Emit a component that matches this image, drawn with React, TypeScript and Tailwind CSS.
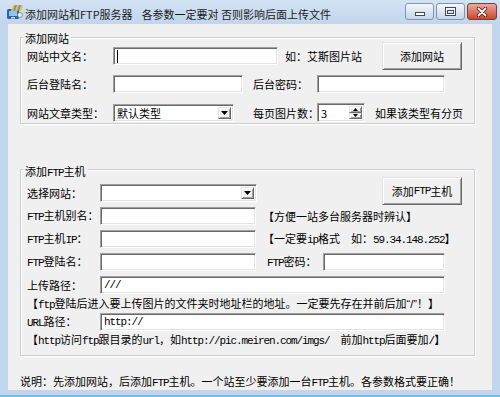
import React from "react";

const sunken =
  "bg-white border border-t-[#a0a0a0] border-l-[#a0a0a0] border-r-[#ffffff] border-b-[#ffffff] shadow-[inset_1px_1px_0_#696969,inset_-1px_-1px_0_#e3e3e3]";
const raised =
  "bg-[#f0f0f0] border border-t-[#e3e3e3] border-l-[#e3e3e3] border-r-[#696969] border-b-[#696969] shadow-[inset_1px_1px_0_#ffffff,inset_-1px_-1px_0_#a0a0a0]";
const group =
  "ml-[12px] w-[455px] border border-[#c9ced3] shadow-[inset_1px_1px_0_#ffffff,1px_1px_0_#ffffff] flex flex-col";
const mono = "font-['Liberation_Mono',monospace] tracking-[-1.1px]";

function M({ children }: { children: React.ReactNode }) {
  return <span className={mono}>{children}</span>;
}

function Down() {
  return (
    <svg width="7" height="4" viewBox="0 0 7 4">
      <polygon points="0,0 7,0 3.5,4" fill="#000" />
    </svg>
  );
}

function Up() {
  return (
    <svg width="5" height="3" viewBox="0 0 5 3">
      <polygon points="0,3 5,3 2.5,0" fill="#000" />
    </svg>
  );
}

function Down5() {
  return (
    <svg width="5" height="3" viewBox="0 0 5 3">
      <polygon points="0,0 5,0 2.5,3" fill="#000" />
    </svg>
  );
}

function Select({ className, children }: { className: string; children?: React.ReactNode }) {
  return (
    <div className={`${sunken} ${className} h-[18px] flex p-[2px] shrink-0`}>
      <div className="flex-1 flex items-center pl-[1px] whitespace-nowrap">
        <span className="leading-[14px]">{children}</span>
      </div>
      <div className={`${raised} w-[13px] flex items-center justify-center`}>
        <Down />
      </div>
    </div>
  );
}

function Input({ className, children }: { className: string; children?: React.ReactNode }) {
  return (
    <div className={`${sunken} ${className} h-[18px] flex items-center pl-[3px] shrink-0 leading-[14px] whitespace-nowrap`}>
      {children}
    </div>
  );
}

function Button({ children }: { children: React.ReactNode }) {
  return (
    <div className={`${raised} w-[80px] h-[28px] flex items-center justify-center leading-[14px] shrink-0`}>
      {children}
    </div>
  );
}

function AppIcon() {
  return (
    <svg width="18" height="16" viewBox="0 0 18 16">
      <rect x="1" y="5" width="12" height="10" rx="1.5" fill="#2f5fa8" />
      <rect x="3" y="7" width="8" height="5" fill="#8cc6f2" />
      <rect x="5" y="13" width="4" height="1.5" fill="#cfe3f6" />
      <polygon points="7,1 17,1 15,7 5,7" fill="#f2c230" />
      <polygon points="9,1 11,1 9,7 7,7" fill="#6b8fc8" />
      <polygon points="13,1 15,1 13,7 11,7" fill="#6b8fc8" />
      <circle cx="14" cy="11" r="2.5" fill="#e9edf2" stroke="#6c7c90" strokeWidth="0.8" />
    </svg>
  );
}

export default function App() {
  return (
    <div className="w-[500px] h-[397px] bg-[#c1d5ec] flex flex-col font-['Noto_Sans_CJK_SC',sans-serif] text-[11px] text-black overflow-hidden">
      {/* Title bar */}
      <div className="h-[24px] shrink-0 flex items-start bg-linear-to-b from-[#d3e3f5] to-[#c1d5ec]">
        <div className="ml-[6px] mt-[4px]">
          <AppIcon />
        </div>
        <div className="ml-[1px] mt-[7px] leading-[14px] whitespace-nowrap text-[#1b1b1b]">
          <span>添加网站和FTP服务器</span>
          <span className="ml-[9px]">各参数一定要对 否则影响后面上传文件</span>
        </div>
        <div className="flex-1" />
        <div className="mt-[3px] mr-[3px] flex gap-[2px]">
          <div className="w-[29px] h-[17px] rounded-[3px] border border-[#8195b2] bg-linear-to-b from-[#f3f7fc] to-[#c6d5e8] flex items-end justify-center pb-[3px]">
            <svg width="10" height="4" viewBox="0 0 10 4">
              <rect x="0.5" y="0.5" width="9" height="3" fill="#fff" stroke="#3c4b62" />
            </svg>
          </div>
          <div className="w-[29px] h-[17px] rounded-[3px] border border-[#8195b2] bg-linear-to-b from-[#f3f7fc] to-[#c6d5e8] flex items-center justify-center">
            <svg width="11" height="9" viewBox="0 0 11 9">
              <rect x="0.5" y="0.5" width="10" height="8" fill="none" stroke="#3c4b62" />
              <rect x="1.5" y="1.5" width="8" height="6" fill="none" stroke="#ffffff" />
              <rect x="2.5" y="3.5" width="6" height="3" fill="none" stroke="#3c4b62" />
            </svg>
          </div>
          <div className="w-[30px] h-[17px] rounded-[3px] border border-[#8e3a2b] bg-linear-to-b from-[#eaa999] to-[#c5452f] flex items-center justify-center">
            <svg width="12" height="10" viewBox="0 0 12 10">
              <path d="M2.5 1.5 L9.5 8.5 M9.5 1.5 L2.5 8.5" stroke="#5b1a10" strokeWidth="3.4" strokeLinecap="round" />
              <path d="M2.5 1.5 L9.5 8.5 M9.5 1.5 L2.5 8.5" stroke="#ffffff" strokeWidth="1.8" strokeLinecap="round" />
            </svg>
          </div>
        </div>
      </div>

      {/* Client area */}
      <div className="mx-[8px] h-[366px] shrink-0 bg-[#f0f0f0] flex flex-col">
        {/* Group 1 */}
        <div className={`${group} mt-[13px] pb-[1px]`}>
          <div className="-mt-[7px] ml-[2px] w-fit px-[2px] bg-[#f0f0f0] leading-[14px]">添加网站</div>
          <div className="-mt-[3px] h-[28px] flex items-center pl-[6px] pr-[12px]">
            <div className="w-[86px] leading-[14px] whitespace-nowrap">网站中文名：</div>
            <Input className="w-[165px]">
              <div className="w-[1px] h-[13px] bg-black" />
            </Input>
            <div className="ml-[7px] leading-[14px] whitespace-nowrap">如：艾斯图片站</div>
            <div className="flex-1" />
            <Button>添加网站</Button>
          </div>
          <div className="mt-[5px] h-[18px] flex items-center pl-[6px]">
            <div className="w-[86px] leading-[14px] whitespace-nowrap">后台登陆名：</div>
            <Input className="w-[130px]" />
            <div className="ml-[10px] w-[64px] leading-[14px] whitespace-nowrap">后台密码：</div>
            <Input className="w-[128px]" />
          </div>
          <div className="mt-[10px] h-[19px] flex items-center pl-[6px]">
            <div className="w-[86px] leading-[14px] whitespace-nowrap">网站文章类型：</div>
            <Select className="w-[121px]">默认类型</Select>
            <div className="ml-[19px] w-[64px] leading-[14px] whitespace-nowrap">每页图片数：</div>
            <div className={`${sunken} w-[48px] h-[19px] flex p-[2px] shrink-0`}>
              <div className="flex-1 flex items-center pl-[1px]">
                <span className="leading-[14px]">3</span>
              </div>
              <div className="w-[13px] flex flex-col">
                <div className={`${raised} flex-1 flex items-center justify-center`}>
                  <Up />
                </div>
                <div className={`${raised} flex-1 flex items-center justify-center`}>
                  <Down5 />
                </div>
              </div>
            </div>
            <div className="ml-[10px] leading-[14px] whitespace-nowrap">如果该类型有分页</div>
          </div>
        </div>

        {/* Group 2 */}
        <div className={`${group} mt-[45px] pb-[7px]`}>
          <div className="-mt-[6px] ml-[2px] w-fit px-[2px] bg-[#f0f0f0] leading-[14px]">
            添加<M>FTP</M>主机
          </div>
          <div className="-mt-[3px] h-[28px] flex items-start pl-[6px] pr-[12px]">
            <div className="mt-[7px] h-[18px] flex items-center">
              <div className="w-[73px] leading-[14px] whitespace-nowrap">选择网站：</div>
              <Select className="w-[157px]" />
            </div>
            <div className="flex-1" />
            <Button>
              添加<M>FTP</M>主机
            </Button>
          </div>
          <div className="mt-[2px] h-[18px] flex items-center pl-[6px]">
            <div className="w-[73px] leading-[14px] whitespace-nowrap">
              <M>FTP</M>主机别名：
            </div>
            <Input className="w-[156px]" />
            <div className="ml-[7px] leading-[14px] whitespace-nowrap">【方便一站多台服务器时辨认】</div>
          </div>
          <div className="mt-[5px] h-[18px] flex items-center pl-[6px]">
            <div className="w-[73px] leading-[14px] whitespace-nowrap">
              <M>FTP</M>主机<M>IP</M>：
            </div>
            <Input className="w-[156px]" />
            <div className="ml-[7px] leading-[14px] whitespace-nowrap">
              【一定要<M>ip</M>格式<M>{"\u00a0\u00a0"}</M>如：<M>59.34.148.252</M>】
            </div>
          </div>
          <div className="mt-[5px] h-[18px] flex items-center pl-[6px]">
            <div className="w-[73px] leading-[14px] whitespace-nowrap">
              <M>FTP</M>登陆名：
            </div>
            <Input className="w-[156px]" />
            <div className="ml-[11px] w-[56px] leading-[14px] whitespace-nowrap">
              <M>FTP</M>密码：
            </div>
            <Input className="w-[122px]" />
          </div>
          <div className="mt-[5px] h-[18px] flex items-center pl-[6px]">
            <div className="w-[73px] leading-[14px] whitespace-nowrap">上传路径：</div>
            <Input className="w-[345px]">
              <M>///</M>
            </Input>
          </div>
          <div className="mt-[2px] pl-[6px] leading-[14px] whitespace-nowrap">
            【<M>ftp</M>登陆后进入要上传图片的文件夹时地址栏的地址。一定要先存在并前后加
            <span className="font-['Liberation_Sans',sans-serif]">“/”</span>！】
          </div>
          <div className="mt-[1px] h-[18px] flex items-center pl-[6px]">
            <div className="w-[73px] leading-[14px] whitespace-nowrap">
              <M>URL</M>路径：
            </div>
            <Input className="w-[345px]">
              <M>http://</M>
            </Input>
          </div>
          <div className="mt-[1px] pl-[6px] leading-[14px] whitespace-nowrap">
            【<M>http</M>访问<M>ftp</M>跟目录的<M>url</M>，如<M>{"http://pic.meiren.com/imgs/\u00a0\u00a0"}</M>前加<M>http</M>后面要加<M>/</M>】
          </div>
        </div>

        <div className="mt-[18px] ml-[12px] leading-[14px] whitespace-nowrap">
          说明：先添加网站，后添加<M>FTP</M>主机。一个站至少要添加一台<M>FTP</M>主机。各参数格式要正确！
        </div>
      </div>

      <div className="flex-1 flex flex-col justify-end">
        <div className="h-[2px] bg-[#55d0ec]" />
      </div>
    </div>
  );
}
